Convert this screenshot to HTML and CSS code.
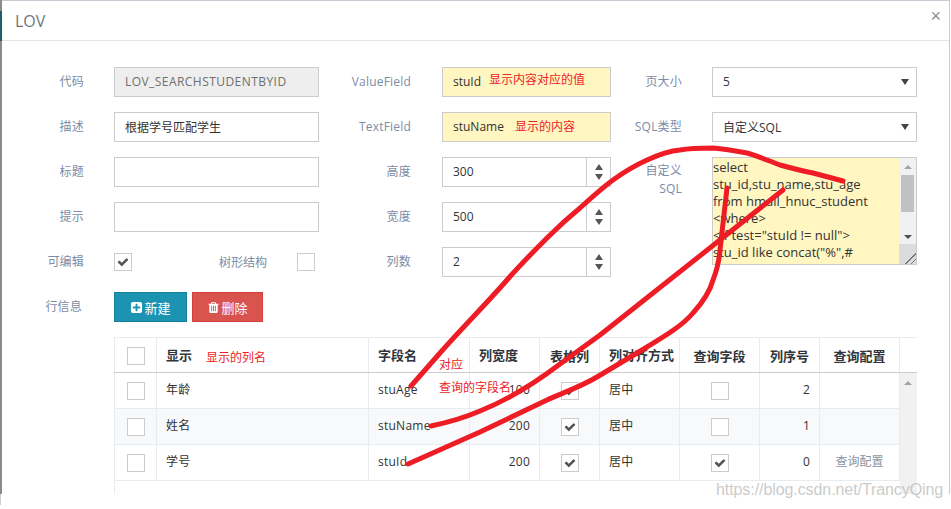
FILE: index.html
```html
<!DOCTYPE html>
<html lang="zh">
<head>
<meta charset="utf-8">
<title>LOV</title>
<link rel="stylesheet" href="styles.css">
</head>
<body>
<div class="page">
  <div class="modal">
    <header class="modal-head">
      <h4 class="modal-title">LOV</h4>
      <span class="close">×</span>
    </header>
    <div class="form-grid">
      <label class="lbl">代码</label>
      <input class="inp disabled" value="LOV_SEARCHSTUDENTBYID" readonly>
      <label class="lbl">ValueField</label>
      <input class="inp yellow" value="stuId" readonly>
      <label class="lbl">页大小</label>
      <div class="select"><span>5</span><i class="caret"></i></div>

      <label class="lbl">描述</label>
      <input class="inp" value="根据学号匹配学生" readonly>
      <label class="lbl">TextField</label>
      <input class="inp yellow" value="stuName" readonly>
      <label class="lbl">SQL类型</label>
      <div class="select"><span>自定义SQL</span><i class="caret"></i></div>

      <label class="lbl">标题</label>
      <input class="inp" readonly>
      <label class="lbl">高度</label>
      <div class="spin"><span>300</span><div class="spin-btns"><i class="up"></i><i class="down"></i></div></div>
      <label class="lbl lbl-top">自定义<br>SQL</label>
      <div class="sql">
        <div class="sql-text">select<br>stu_id,stu_name,stu_age<br>from hmall_hnuc_student<br>&lt;where&gt;<br>&lt;if test="stuId != null"&gt;<br>stu_id like concat("%",#</div>
        <div class="vbar">
          <i class="vbar-up"></i>
          <b class="vbar-thumb"></b>
          <i class="vbar-down"></i>
          <div class="vbar-corner"></div>
        </div>
      </div>

      <label class="lbl">提示</label>
      <input class="inp" readonly>
      <label class="lbl">宽度</label>
      <div class="spin"><span>500</span><div class="spin-btns"><i class="up"></i><i class="down"></i></div></div>

      <label class="lbl">可编辑</label>
      <div class="check-row">
        <span class="chk"><svg viewBox="0 0 1792 1792"><path d="M1671 566q0 40-28 68l-724 724-136 136q-28 28-68 28t-68-28l-136-136-362-362q-28-28-28-68t28-68l136-136q28-28 68-28t68 28l294 295 656-657q28-28 68-28t68 28l136 136q28 28 28 68z"/></svg></span>
        <span class="tree-lbl">树形结构</span>
        <span class="chk"></span>
      </div>
      <label class="lbl">列数</label>
      <div class="spin"><span>2</span><div class="spin-btns"><i class="up"></i><i class="down"></i></div></div>
    </div>

    <div class="toolbar">
      <label class="lbl tool-lbl">行信息</label>
      <button class="btn btn-new"><svg viewBox="0 0 1792 1792"><path d="M1408 960v-128q0-26-19-45t-45-19h-320v-320q0-26-19-45t-45-19h-128q-26 0-45 19t-19 45v320h-320q-26 0-45 19t-19 45v128q0 26 19 45t45 19h320v320q0 26 19 45t45 19h128q26 0 45-19t19-45v-320h320q26 0 45-19t19-45zm256-544v960q0 119-84.5 203.5t-203.5 84.5h-960q-119 0-203.5-84.5t-84.5-203.5v-960q0-119 84.5-203.5t203.5-84.5h960q119 0 203.5 84.5t84.5 203.5z"/></svg>新建</button>
      <button class="btn btn-del"><svg viewBox="0 0 1792 1792"><path d="M704 1376v-704q0-14-9-23t-23-9h-64q-14 0-23 9t-9 23v704q0 14 9 23t23 9h64q14 0 23-9t9-23zm256 0v-704q0-14-9-23t-23-9h-64q-14 0-23 9t-9 23v704q0 14 9 23t23 9h64q14 0 23-9t9-23zm256 0v-704q0-14-9-23t-23-9h-64q-14 0-23 9t-9 23v704q0 14 9 23t23 9h64q14 0 23-9t9-23zm-544-992h448l-48-117q-7-9-17-11h-317q-10 2-17 11zm928 32v64q0 14-9 23t-23 9h-96v948q0 83-47 143.5t-113 60.5h-832q-66 0-113-58.5t-47-141.5v-952h-96q-14 0-23-9t-9-23v-64q0-14 9-23t23-9h309l70-167q15-37 54-63t79-26h320q40 0 79 26t54 63l70 167h309q14 0 23 9t9 23z"/></svg>删除</button>
    </div>

    <div class="grid-wrap">
      <table class="grid">
        <colgroup>
          <col class="c1"><col class="c2"><col class="c3"><col class="c4"><col class="c5"><col class="c6"><col class="c7"><col class="c8"><col class="c9"><col class="c10">
        </colgroup>
        <thead>
          <tr>
            <th class="ctr"><span class="chk"></span></th>
            <th>显示</th><th>字段名</th><th>列宽度</th><th class="ctr">表格列</th><th>列对齐方式</th><th class="ctr">查询字段</th><th class="ctr">列序号</th><th class="ctr">查询配置</th><th></th>
          </tr>
        </thead>
        <tbody>
          <tr>
            <td class="ctr"><span class="chk"></span></td><td class="txt">年龄</td><td class="txt">stuAge</td><td class="num">100</td>
            <td class="ctr"><span class="chk"><svg viewBox="0 0 1792 1792"><path d="M1671 566q0 40-28 68l-724 724-136 136q-28 28-68 28t-68-28l-136-136-362-362q-28-28-28-68t28-68l136-136q28-28 68-28t68 28l294 295 656-657q28-28 68-28t68 28l136 136q28 28 28 68z"/></svg></span></td>
            <td class="txt">居中</td><td class="ctr"><span class="chk"></span></td><td class="num">2</td><td></td>
            <td class="sb" rowspan="4"><i class="vbar-up"></i></td>
          </tr>
          <tr class="alt">
            <td class="ctr"><span class="chk"></span></td><td class="txt">姓名</td><td class="txt">stuName</td><td class="num">200</td>
            <td class="ctr"><span class="chk"><svg viewBox="0 0 1792 1792"><path d="M1671 566q0 40-28 68l-724 724-136 136q-28 28-68 28t-68-28l-136-136-362-362q-28-28-28-68t28-68l136-136q28-28 68-28t68 28l294 295 656-657q28-28 68-28t68 28l136 136q28 28 28 68z"/></svg></span></td>
            <td class="txt">居中</td><td class="ctr"><span class="chk"></span></td><td class="num">1</td><td></td>
          </tr>
          <tr>
            <td class="ctr"><span class="chk"></span></td><td class="txt">学号</td><td class="txt">stuId</td><td class="num">200</td>
            <td class="ctr"><span class="chk"><svg viewBox="0 0 1792 1792"><path d="M1671 566q0 40-28 68l-724 724-136 136q-28 28-68 28t-68-28l-136-136-362-362q-28-28-28-68t28-68l136-136q28-28 68-28t68 28l294 295 656-657q28-28 68-28t68 28l136 136q28 28 28 68z"/></svg></span></td>
            <td class="txt">居中</td>
            <td class="ctr"><span class="chk"><svg viewBox="0 0 1792 1792"><path d="M1671 566q0 40-28 68l-724 724-136 136q-28 28-68 28t-68-28l-136-136-362-362q-28-28-28-68t28-68l136-136q28-28 68-28t68 28l294 295 656-657q28-28 68-28t68 28l136 136q28 28 28 68z"/></svg></span></td>
            <td class="num">0</td><td class="ctr link">查询配置</td>
          </tr>
          <tr class="filler"><td colspan="9"></td></tr>
        </tbody>
      </table>
    </div>
  </div>

  <div class="notes">
    <span class="note n1">显示内容对应的值</span>
    <span class="note n2">显示的内容</span>
    <span class="note n3">显示的列名</span>
    <span class="note n4">对应</span>
    <span class="note n5">查询的字段名</span>
    <svg class="ink" viewBox="0 0 951 509" width="951" height="509">
      <path d="M411 386 L440 353 C462 328 487 303 507 280 C520 265 534 251 547 238 C558 227 569 217 580 208 C591 198 602 188 613 180 C624 172 636 165 647 160 C658 155 669 151 680 150 C691 148 702 148 713 148 C724 149 736 151 747 153 C758 156 769 161 780 165 C791 168 802 171 813 173 L843 181"/>
      <path d="M431 426 C450 422 466 417 480 411 C510 399 535 383 560 364 L600 335 L783 190"/>
      <path d="M408 464 L480 432 L547 400 C565 392 582 386 597 377 L647 347 C665 336 682 326 693 313 C703 302 710 291 713 280 C717 270 719 262 720 250 L727 188"/>
    </svg>
    <span class="mark">https://blog.csdn.net/TrancyQing</span>
  </div>
</div>
</body>
</html>
```

FILE: styles.css
```css
* { box-sizing: border-box; }
html, body { margin: 0; padding: 0; background: #fff; }
body { font-family: "Open Sans", "Noto Sans CJK SC", sans-serif; font-size: 12px; color: #333; }

.page {
  position: relative; width: 951px; height: 509px; overflow: hidden;
  padding-left: 2px;
  background:
    linear-gradient(#8a8a8a 0 11px, #1f5f70 11px 41px, #8a8a8a 41px) 0 0 / 2px 494px no-repeat,
    linear-gradient(#cfcfcf, #cfcfcf) 0 494px / 1px 11px no-repeat,
    #fff;
}

.modal {
  width: 948px; height: 494px; overflow: hidden; background: #fff;
  border-top: 1px solid #c9cbd4; border-right: 1px solid #c9cbd4;
}
.modal-head { height: 40px; border-bottom: 1px solid #e5e5e5; display: flex; align-items: flex-start; justify-content: space-between; padding: 8px 8px 0 13px; }
.modal-title { margin: 0; font-size: 16px; line-height: 24px; font-weight: 400; color: #6d7680; }
.close { font-size: 18px; line-height: 14px; color: #8f8f8f; font-family: "Liberation Sans", sans-serif; }

.form-grid {
  display: grid; margin-top: 26px;
  grid-template-columns: 82px 235px 92px 200px 71px 235px;
  row-gap: 15px; grid-auto-rows: 30px;
}
.lbl { color: #7c8ca5; line-height: 30px; text-align: right; white-space: nowrap; letter-spacing: 0.2px; }
.form-grid > * { align-self: start; }
.inp, .select, .spin, .sql, .check-row { margin-left: 30px; }

.inp { height: 30px; width: 205px; border: 1px solid #ccc; padding: 0 10px 1px; font: inherit; color: #333; background: #fff; outline: none; }
.inp.disabled { background: #eee; color: #6f6f6f; letter-spacing: 0.45px; }
.inp.yellow { background: #fff6c2; width: 169px; margin-left: 31px; }
.select { height: 30px; width: 205px; border: 1px solid #ccc; display: flex; align-items: center; justify-content: space-between; padding: 0 7px 1px 10px; }
.caret { width: 0; height: 0; border-left: 4px solid transparent; border-right: 4px solid transparent; border-top: 6px solid #444; margin-top: 1px; }

.spin { height: 30px; width: 169px; margin-left: 31px; border: 1px solid #ccc; display: flex; align-items: center; justify-content: space-between; padding-left: 10px; }
.spin > span { margin-top: -2px; }
.spin-btns { width: 24px; height: 28px; border-left: 1px solid #ccc; display: flex; flex-direction: column; align-items: center; justify-content: center; gap: 4px; }
.up { width: 0; height: 0; border-left: 4px solid transparent; border-right: 4px solid transparent; border-bottom: 6px solid #555; }
.down { width: 0; height: 0; border-left: 4px solid transparent; border-right: 4px solid transparent; border-top: 6px solid #555; }

.lbl-top { line-height: 18px; padding-top: 5px; grid-row: span 3; }
.sql { grid-row: span 3; grid-column: 6; height: 108px; width: 205px; border: 1px solid #ccc; background: #fff6c2; display: flex; overflow: hidden; }
.sql-text { flex: 1; padding: 1px 0 0 0; font-size: 13px; line-height: 17px; color: #333; white-space: nowrap; overflow: hidden; }
.vbar { width: 17px; background: #f1f1f1; display: flex; flex-direction: column; align-items: center; height: 100%; }
.vbar-up { display: block; width: 0; height: 0; margin-top: 7px; border-left: 4px solid transparent; border-right: 4px solid transparent; border-bottom: 4px solid #a3a3a3; }
.vbar-thumb { width: 13px; height: 37px; background: #c1c1c1; margin-top: 6px; }
.vbar-down { display: block; width: 0; height: 0; margin-top: 23px; border-left: 4px solid transparent; border-right: 4px solid transparent; border-top: 4px solid #505050; }
.vbar-corner { width: 17px; flex: 1; margin-top: 5px; background: linear-gradient(135deg, #dcdcdc 0 70%, #777 70% 74%, #dcdcdc 74% 84%, #777 84% 88%, #dcdcdc 88%); }

.check-row { display: flex; align-items: center; height: 30px; width: 205px; }
.chk { display: inline-block; width: 18px; height: 18px; border: 1px solid #ccc; background: #fff; vertical-align: middle; }
.chk svg { display: block; width: 12px; height: 12px; margin: 2px; fill: #555; }
.tree-lbl { margin-left: 87px; margin-right: 30px; color: #7c8ca5; }

.toolbar { display: flex; align-items: center; margin-top: 15px; height: 30px; }
.tool-lbl { width: 80px; margin-right: 32px; }
.btn { height: 30px; border: 1px solid; color: #fff; font: inherit; font-size: 13px; display: flex; align-items: center; justify-content: center; padding: 0; }
.btn svg { width: 13px; height: 13px; fill: #fff; margin-right: 1px; }
.btn-new { width: 73px; background: #1c93b0; border-color: #16809b; }
.btn-del { width: 71px; margin-left: 5px; background: #d9534f; border-color: #d43f3a; }

.grid-wrap { margin: 15px 0 0 112px; width: 803px; height: 160px; overflow: hidden; }
.grid { border-collapse: collapse; table-layout: fixed; width: 803px; }
.c1 { width: 42px; } .c2 { width: 212px; } .c3 { width: 101px; } .c4 { width: 70px; } .c5 { width: 60px; } .c6 { width: 80px; } .c7 { width: 80px; } .c8 { width: 60px; } .c9 { width: 80px; } .c10 { width: 18px; }
.grid th, .grid td { border: 1px solid #e7ecf1; padding: 0 9px; font-size: 12px; color: #333; text-align: left; white-space: nowrap; }
.grid th { height: 35px; font-size: 13px; font-weight: 700; border-bottom: 1px solid #ccc; color: #2f353b; padding-bottom: 2px; }
.grid td { height: 36px; }
.grid td.txt, .grid td.num { padding-bottom: 3px; letter-spacing: 0.25px; }
.grid .ctr { text-align: center; padding: 0; }
.grid .num { text-align: right; }
.grid .alt td { background: #f8f9fa; }
.grid .alt .chk { background: #fff; }
.grid td.link { color: #8a95a3; padding-bottom: 3px; }
.grid td.sb { background: #f1f1f1; vertical-align: top; padding: 0 0 0 4px; border: 0; }
.grid .sb .vbar-up { border-bottom-color: #a3a3a3; margin-top: 8px; }
.grid .filler td { height: 14px; border: 0; border-left: 1px solid #e7ecf1; background: #fff; }

.notes { position: absolute; inset: 0; pointer-events: none; }
.note { position: absolute; color: #ee1c25; font-size: 12px; line-height: 16px; white-space: nowrap; }
.n1 { left: 489px; top: 72px; }
.n2 { left: 515px; top: 119px; }
.n3 { left: 206px; top: 350px; }
.n4 { left: 439px; top: 357px; }
.n5 { left: 439px; top: 380px; }
.ink { position: absolute; left: 0; top: 0; }
.ink path { fill: none; stroke: #ee1c25; stroke-width: 5; stroke-linecap: round; stroke-linejoin: round; }
.mark { position: absolute; left: 716px; top: 481px; font-family: "Liberation Sans", sans-serif; font-size: 16px; color: rgba(185,185,185,0.75); letter-spacing: -0.08px; white-space: nowrap; }
```
